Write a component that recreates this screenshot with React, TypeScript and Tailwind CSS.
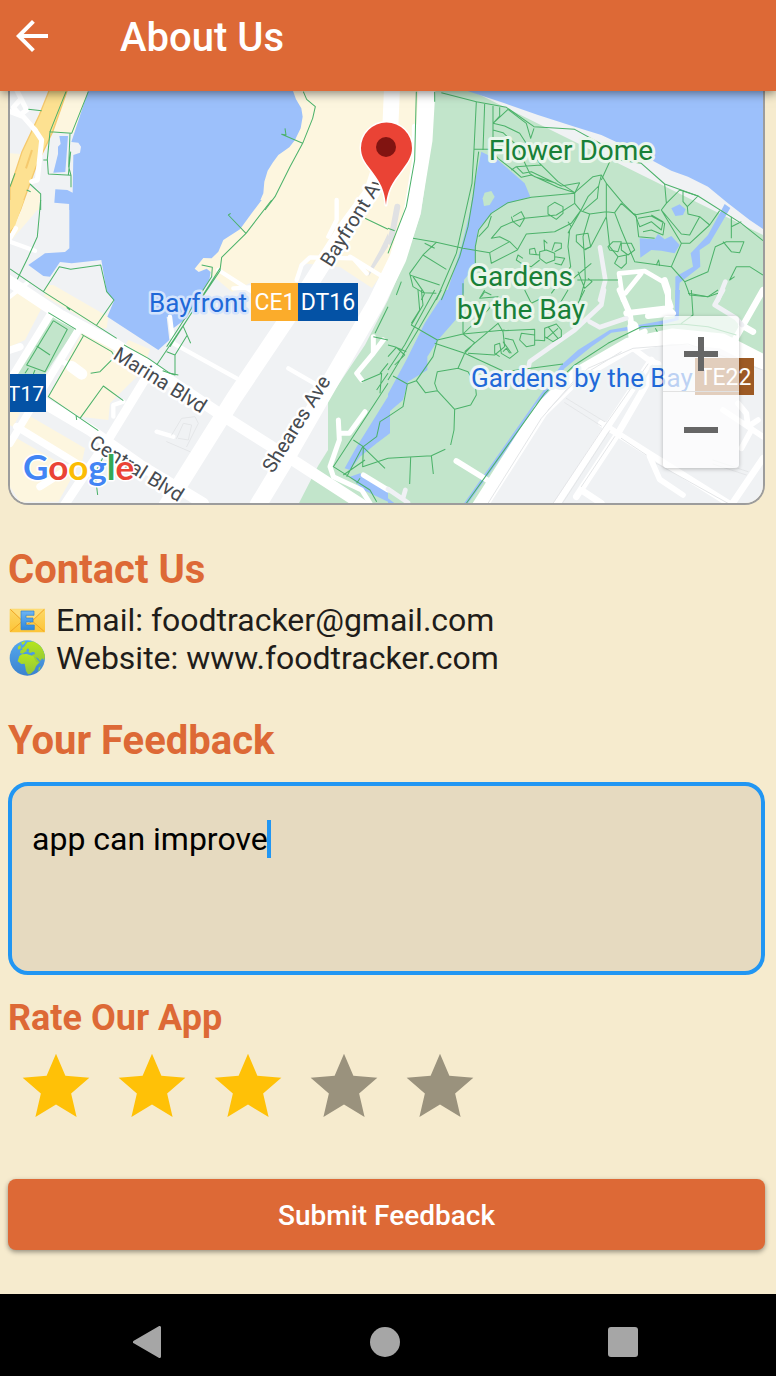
import { useState } from "react";

const WATER = "#9cc0fb";
const PARK = "#c2e5cb";
const SAND = "#fdf6df";

/* The map is traced in four tiles, each drawn on a grid of three units per pixel. */
const NW = "scale(0.33333)";
const NE = "translate(388 80) scale(0.33333)";
const SW = "translate(0 200) scale(0.33333)";
const SE = "translate(388 290) scale(0.33333)";

function MapLand() {
  return (
    <g>
      <rect x="8" y="90" width="760" height="420" fill="#f0f2f4" />
      <g fill={SAND}>
        <path transform={NW} d="M200 270H268L222 400L155 398Z M30 460L62 462L30 560Z M90 560L120 580L118 630H62Z" />
        <path d="M290 90H442L425 190L405 240L372 288L340 267L300 263L296 283L250 283L232 292L213 276L190 268Z" />
        <path transform={SW} d="M60 0H120L112 30L35 120V60Z M30 290L60 270L128 318L75 420L30 440Z M140 255L160 255L325 350L320 385L300 385L132 288Z M385 420L450 448L440 480L370 445Z M245 400L330 440L410 530L330 610L325 660L240 650L145 590Z M75 640L255 745L245 790L60 690Z M30 620L60 640L40 680L30 676Z M30 720L50 715L225 815L175 905H60L30 860Z" />
      </g>
      <g fill={WATER}>
        <path transform={NW} d="M265 270H878L888 298L904 325L908 350L902 385L885 420L868 442L835 465L818 488L803 512L793 545L790 580L780 603L760 630H208V612L163 608L166 568L202 570L218 578L220 465L240 458L243 440L235 428L214 426L222 402Z M178 408H204L196 516L160 518L174 462V440L182 432Z" />
        <path transform={SW} d="M208 0H785L755 40L720 88L670 120L655 155L635 175L610 174L584 206L596 216L620 206L632 216L628 240L560 355L520 385L506 352L500 350L508 420L475 450L322 350L342 302L320 275L304 180L215 190L180 186L150 230L130 228L85 195L135 160L195 156L208 145Z" />
      </g>
      <path d="M434 90H470L763 235V360L720 338L660 334L620 345L575 374L540 408L478 505H298L318 466L328 450V400L365 345L388 300L406 258L421 213L431 140Z" fill={PARK} />
      <path transform={SW} d="M145 338L228 385L130 530H70L35 520Z" fill={PARK} />
      <g fill={WATER}>
        <path transform={NE} d="M230 30H1130V450L1085 420L1020 370L960 320L900 290L850 272L800 245L690 188L640 165L560 140L450 105L350 70Z" />
        <path transform={NE} d="M280 215L330 240L410 310L427 350L360 370L310 400L270 450L262 500L260 560L228 600V640L170 660L220 500L245 400L262 300Z" />
        <path transform={SE} d="M175 0H225L220 70L150 150L118 200V240L60 275L45 330L0 368V312L55 210L110 100Z" />
        <path transform={SW} d="M1170 580V700L1130 730L1080 770L1050 810L1034 805L1070 740Z M1080 820L1164 870V905L1090 870L1050 830Z" />
        <path transform={NE} d="M1010 372L1027 384L965 490L935 510L937 560L875 608L870 665H862V590L915 560L908 520L960 465Z M850 385L875 373L893 388L885 405L862 408Z M755 475L800 478L810 462L830 478L850 468L875 495L860 520L820 512L790 510L757 533Z" />
        <path transform={SE} d="M862 0H876L872 90L790 112L670 128L610 170L530 235L240 640H228L520 225L570 180L665 120L790 98L860 85Z M0 625L20 640H0Z" />
      </g>
      <path transform={NE} d="M290 338L310 333L320 350L305 375L288 378L284 355Z" fill={PARK} />
      <path transform={NW} d="M148 270H202L158 395L108 500L62 628L30 700V565L66 455L118 345Z" fill="#fde191" stroke="#f5c96d" strokeWidth="4" />
      <path transform={NW} d="M96 450L78 505" fill="none" stroke="#f5c96d" strokeWidth="6" />
      <path transform={SW} d="M30 0H72L46 75L30 92Z" fill="#fde191" />
      <path transform={SW} d="M1164 100V140L1105 230L1112 200L1140 150Z" fill="#e0e1e3" />
    </g>
  );
}

function MapRoads() {
  return (
    <g fill="none" strokeLinejoin="round" strokeLinecap="round">
      <g stroke="#fff">
        <g transform={NW}>
          <path d="M50 270L80 330L60 345L40 322L60 300M30 335L70 350L105 390" strokeWidth="15" />
          <path d="M105 390L125 420L112 540L95 545" strokeWidth="15" />
        </g>
        <path d="M392 88L390 135L372 192L347 226L300 300L234 398L165 508" strokeWidth="16" />
        <path d="M427 88L424 140L412 213L398 258L376 303L333 377L287 457L258 505" strokeWidth="17" />
        <g transform={SW}>
          <path d="M0 225L180 345L350 435L650 635L870 775L1110 930" strokeWidth="34" />
          <path d="M100 590L270 690L420 795L610 910" strokeWidth="34" />
          <path d="M150 345L30 540M30 450L60 440M235 390L30 730M50 680L230 790L120 860" strokeWidth="22" />
          <path d="M440 530L330 710L190 920" strokeWidth="27" />
          <path d="M510 350L520 430L710 535M655 210L780 290M700 265L750 262M865 505L960 560M1010 0L1010 60L985 110M890 240L905 195L930 172L1060 175L1100 220M1050 170L1164 240M470 695L520 710M340 650V615L370 605M30 125L105 152M30 115L48 85M30 290L80 250" strokeWidth="13" />
          <path d="M215 500L245 522" strokeWidth="34" />
          <path d="M180 480L225 508" strokeWidth="16" />
          <path d="M1120 410L1120 460L1070 520L1085 540M1120 460L1150 420M1015 660L1018 720L990 800L1000 830L1085 870L1110 910M1020 700L1048 700L1095 635M1164 870L1090 825" strokeWidth="15" />
        </g>
        <path d="M474 515L541 410L577 375L629 345L672 336L722 341L775 368" strokeWidth="15" />
        <g transform={SE}>
          <path d="M505 645L655 415L790 210M565 620L690 430L810 222M580 600L640 640" strokeWidth="20" />
          <path d="M640 400L790 495L1030 645L1125 505" strokeWidth="20" />
          <path d="M205 513L310 578M735 175L775 205L810 222M785 500L815 568L885 615M1005 360L1125 440M1050 340L1075 370L1080 410L1110 390M1090 420L1060 475" strokeWidth="17" />
          <path d="M695 0L725 70L735 140L770 125M715 70L840 55L855 70L780 78M840 55V0L830 -30" strokeWidth="18" />
          <path d="M1125 0L1040 150M1060 105L1095 125" strokeWidth="19" />
          <path d="M735 110L740 155L690 185" strokeWidth="34" />
        </g>
        <g transform={NE}>
          <path d="M705 660L693 580L770 573L825 605L850 680M760 580L712 640" strokeWidth="14" />
          <path d="M80 140V270" strokeWidth="17" />
        </g>
      </g>
      <g stroke="#f0f1f5" strokeWidth="14">
        <path transform={NE} d="M636 502L652 600L636 660M1012 605L990 660" />
        <path transform={SE} d="M648 0L640 45L560 120L425 215L420 240M605 95L635 112L715 85M1005 0L980 45L1045 85L1062 105M0 597L60 638M52 600L45 625" />
      </g>
      <g stroke="#e4e6e8" strokeWidth="3">
        <path transform={SW} d="M515 705L545 655L585 650L595 670L560 740M530 715L550 670L575 675L565 720L535 715M570 755L500 725" />
        <path transform={SE} d="M535 325L650 395M530 338L640 408M975 510L1080 545M975 522L1075 555M300 640L460 385L560 270L700 185M480 360L600 235L735 175L900 162L1125 240" />
        <path transform={SE} d="M495 640L645 415L780 222M520 645L665 422M580 590L680 440M700 445L775 495M805 520L1020 640" />
      </g>
      <path transform={NE} d="M28 380L15 450L5 485" stroke="#e0e1e3" strokeWidth="18" />
    </g>
  );
}

function MapPaths() {
  return (
    <g fill="none" stroke="#4cb26a" strokeWidth="3.1" strokeLinejoin="round">
      <g transform={NW}>
        <path d="M198 275L150 395L215 400L265 275M85 328L125 332M150 395L142 478L145 522L213 526L206 500L210 400M130 480H142M213 526V562M45 520L30 560M90 552L122 582V630M80 570L92 575M205 525L212 455" />
        <path d="M910 275L920 298L946 320L938 355L908 430L870 500L825 590L795 630M908 430L845 403L858 405L855 385" />
      </g>
      <g transform={SW}>
        <path d="M122 0L112 110L85 170L52 238M30 207L130 275L350 415M130 275L178 200L212 208L302 195L320 275L342 300L290 375M200 322L210 330M372 435L445 475L510 520L535 525" />
        <path d="M815 0L738 100L665 172L660 212L470 495M738 100L685 45L692 40M605 195L637 202L635 230L500 440M510 440L660 205M550 380L572 430M562 405L525 465L500 455M525 465V525L488 512" />
        <path d="M145 338L228 388M160 362L202 388L135 515L80 495L160 362M110 438L150 465M85 505L75 520M105 510L100 522M245 403L335 455L345 470L300 515L272 520M250 408L145 590L295 692M240 655L310 558L370 602M230 660L228 645M310 770L285 820L293 885" />
        <path d="M1095 55L1164 88M1125 400L1164 320M1164 420L1120 410M1085 545L1145 520L1140 580M1140 520L1164 490M1164 550L1000 800L1110 870L1130 905M1164 520L1130 570M1060 720L1090 740L1130 710L1140 665L1164 650M1090 740L1088 800L1164 775M1040 830L1088 740L1155 805M1030 825L1095 780M1070 850L1080 835" />
      </g>
      <g transform={NE}>
        <path d="M85 35L80 240L55 380L0 520M140 35V65M160 38L265 65L355 82L438 140L560 148L645 195L690 240L760 250L830 312L930 348L1060 430L1125 482" />
        <path d="M265 65L258 208H308M290 72L285 210M258 208L252 310L225 430L205 520L145 660M272 215L255 350L240 440L215 530L160 660" />
        <path d="M315 78V215L330 235L375 270L400 292L430 285L510 322L560 338L615 290L640 285L655 310L705 370L745 410L752 470L800 475M335 82V108L315 130L360 88L415 130L428 175L438 145M315 130L350 138L395 160L418 195L455 250L510 305L560 338M315 150L345 158L385 195L425 280L440 290L505 310M370 270L385 260L460 255M385 260L405 280L430 275L520 318L575 308" />
        <path d="M560 340L430 352L360 368L310 400L272 450L262 500V550M575 308L560 340V370L578 392L605 402L655 395L680 398L700 370M578 392L600 350L632 318L628 355L585 392M640 285L632 318M665 245L640 300M655 310V410L608 500L590 510M655 410L665 500L690 530M680 398L700 450L740 545L850 560L880 490L820 390L835 370L875 330L930 348L898 380L885 365V335M830 312L835 368M700 370L740 405L815 390M740 400L755 440L790 425L820 450L825 425L790 405M750 415L790 408L830 430L825 465L790 450L765 455M820 390L880 462L905 465L935 410L900 402L898 380M935 410L965 435L905 490H880M850 560L890 605L960 575L982 500L1015 485L1068 485L1055 518L1030 515L1005 485M1030 475V410M1030 440L1060 425M890 605L905 645L960 650L990 640M1125 585L1085 560H1045L1025 600L1040 590M995 392L965 435" />
        <path d="M578 392L550 430L500 455L415 462L388 510L310 550L305 518L365 485L390 510M305 518L225 505L145 487L75 475M145 487L105 525L65 580L75 620L105 638L145 640M105 525L175 568M65 585L155 615M75 590L110 640L100 660M0 445L20 452M110 490L140 505M25 645L40 605M310 408L300 440L272 470M365 485L335 470L310 475L340 440L375 425L410 415L505 405L560 370M375 410L400 395L410 415L395 440L375 425L370 410M480 380L500 367L525 380V400L505 418L480 402ZM578 392L545 450L540 500L548 560L490 640M605 402L585 470L590 540L592 600L575 660M540 425L550 440L540 460M565 465L600 460L608 500L590 508L565 485ZM568 600H690M570 575L590 625L612 605L600 595M550 600L610 550M660 500L675 485H700L690 515L665 510ZM700 490H730L740 510L720 525L700 510ZM690 530L715 525V550L700 565L680 550ZM805 555L812 540L815 558" />
        <path d="M475 510L500 520V540L475 550L455 535V515ZM470 510L468 480L478 490M492 512L500 488L520 490V505L500 515M500 530L530 535L520 555L500 550M455 525L425 522V508L440 505L445 525M455 540L430 560L400 550L385 540L390 525L405 535M225 610V660M280 650L290 635L310 645" />
      </g>
      <g transform={SE}>
        <path d="M160 0L90 120L0 270M140 0L50 165L0 240M100 0L105 45L70 105L148 150L225 132L350 120M90 0L95 60L70 100M0 165L20 170L55 185M0 200L25 172L50 195L20 225M15 258L58 282L45 350L0 380M58 282L85 272L135 200L148 150M85 272L112 308L148 302L200 358L248 345L265 315L262 282L240 245L210 235L148 245L140 280L148 302M140 160L230 190L260 158L225 132L300 60M230 190L210 235M230 190L350 245L525 222M230 185L330 100L345 125L350 170L320 195L240 190M200 358L198 420L188 465M0 505L130 497L172 478M68 502L65 582M130 497L136 552M225 60V130M300 60L330 20L275 25L290 0M340 20L360 60M410 0L430 40L470 20M510 50L540 0M570 40L590 0" />
        <path d="M345 122L440 118V165L415 170L395 150L400 130L440 135M350 145L375 150L390 185L365 205L340 190L335 160L320 165V190L335 200M345 155L370 190M345 185L355 175L365 190M440 150L470 152L470 115L505 102L520 120V140L495 155L470 140M480 110L510 145M510 115L475 145" />
        <path d="M235 640L470 310L560 225L660 160L760 110L880 102L960 110L1045 135M802 115L808 125M910 0L915 75L880 100M900 10L960 20L990 0" />
      </g>
    </g>
  );
}

function MapLabels() {
  return (
    <g fontFamily="Roboto, sans-serif" fontSize="28" paintOrder="stroke" strokeLinejoin="round">
      <g fill="#188038" stroke="#eaf6ec" strokeWidth="6" textAnchor="middle">
        <text x="571" y="160">Flower Dome</text>
        <text x="521" y="286">Gardens</text>
        <text x="521" y="319">by the Bay</text>
      </g>
      <g fill="#1f69d8" fontSize="26">
        <text x="149" y="312" stroke="#d3e3fc" strokeWidth="5">Bayfront</text>
        <text x="471" y="387" stroke="#eef5f7" strokeWidth="6">Gardens by the Bay</text>
      </g>
      <g fill="#474b50" stroke="#ffffff" strokeWidth="5" fontSize="20">
        <text transform="translate(112 358) rotate(32)">Marina Blvd</text>
        <text transform="translate(88 446) rotate(32)">Central Blvd</text>
        <text transform="translate(331 268) rotate(-58)">Bayfront Av</text>
        <text transform="translate(273 474) rotate(-58)">Sheares Ave</text>
      </g>
      <rect x="251" y="283" width="48" height="38" fill="#fbac2b" />
      <rect x="298" y="283" width="60" height="38" fill="#0452a5" />
      <rect x="8" y="374" width="38" height="38" fill="#0452a5" />
      <rect x="695" y="358" width="59" height="37" fill="#9d5a24" />
      <g fill="#fff" fontSize="23">
        <text x="275" y="310" textAnchor="middle">CE1</text>
        <text x="328" y="310" textAnchor="middle">DT16</text>
        <text x="44" y="401" textAnchor="end" fontSize="21">T17</text>
        <text x="725" y="385" textAnchor="middle">TE22</text>
      </g>
      <path d="M386 205C384 186 378 180 371 170C364 161 361 156 361 148A25.500 25.500 0 0 1 412 148C412 156 408 162 402 170C394 181 388 187 386 205Z" fill="#ea4335" stroke="#fff" strokeWidth="3" />
      <circle cx="386" cy="147" r="10" fill="#811411" />
      <text x="23" y="480" fontFamily="Lato, sans-serif" fontSize="35" fontWeight="700" stroke="#fff" strokeWidth="3">
        <tspan fill="#4285f4">G</tspan>
        <tspan fill="#ea4335">o</tspan>
        <tspan fill="#fbbc04">o</tspan>
        <tspan fill="#4285f4">g</tspan>
        <tspan fill="#34a853">l</tspan>
        <tspan fill="#ea4335">e</tspan>
      </text>
    </g>
  );
}

function LocationMap() {
  return (
    <section aria-label="Location" className="relative overflow-hidden rounded-b-[20px] border-2 border-t-0 border-[#9c9c9c]">
      <svg viewBox="10 91 753 412" className="block w-full">
        <MapLand />
        <MapRoads />
        <MapPaths />
        <MapLabels />
      </svg>
      <div className="absolute right-6 bottom-[35px] flex w-[76px] flex-col divide-y divide-[#e2e2e2] rounded-sm bg-white/70 shadow-[0_1px_4px_rgba(0,0,0,0.25)]">
        <button type="button" aria-label="Zoom in" className="flex h-19 items-center justify-center">
          <svg viewBox="0 0 34 34" className="size-[34px]" fill="none" stroke="#666" strokeWidth="6">
            <path d="M0 17H34M17 0V34" />
          </svg>
        </button>
        <button type="button" aria-label="Zoom out" className="flex h-19 items-center justify-center">
          <svg viewBox="0 0 34 34" className="size-[34px]" fill="none" stroke="#666" strokeWidth="6">
            <path d="M0 17H34" />
          </svg>
        </button>
      </div>
    </section>
  );
}

function EmailIcon() {
  return (
    <svg viewBox="0 0 114 114" aria-hidden="true" className="size-[38px]">
      <defs>
        <linearGradient id="envelope" x1="0" y1="0" x2="0" y2="1">
          <stop offset="0" stopColor="#fcd868" />
          <stop offset="1" stopColor="#fdc436" />
        </linearGradient>
        <linearGradient id="letter" x1="0" y1="0" x2="0" y2="1">
          <stop offset="0" stopColor="#6cb4f2" />
          <stop offset="1" stopColor="#2f88dc" />
        </linearGradient>
      </defs>
      <rect x="5" y="23" width="106" height="71" rx="3" fill="url(#envelope)" />
      <path d="M7 92L46 58M109 92L70 58" stroke="#f0a524" strokeWidth="3" />
      <path d="M7 25L50 66Q58 72 66 66L109 25" fill="#fedd78" stroke="#f0a524" strokeWidth="3" />
      <path d="M39 30H78V43H54V51H75V63H54V72H79V86H39Z" fill="url(#letter)" stroke="#2f80d0" strokeWidth="2" />
    </svg>
  );
}

function GlobeIcon() {
  return (
    <svg viewBox="0 0 114 114" aria-hidden="true" className="size-[38px]">
      <defs>
        <linearGradient id="ocean" x1="0" y1="0" x2="0" y2="1">
          <stop offset="0" stopColor="#55a9ee" />
          <stop offset="1" stopColor="#3b82cf" />
        </linearGradient>
        <linearGradient id="land" x1="0" y1="0" x2="0" y2="1">
          <stop offset="0" stopColor="#b6e61c" />
          <stop offset="1" stopColor="#91c43c" />
        </linearGradient>
        <clipPath id="disc">
          <circle cx="58" cy="57" r="53" />
        </clipPath>
      </defs>
      <circle cx="58" cy="57" r="53" fill="url(#ocean)" />
      <g clipPath="url(#disc)" fill="url(#land)">
        <path d="M40 10L52 6L49 14L43 18Z M48 24L58 10L82 6L102 24L112 50L108 64L103 58L96 66L90 58L82 54L92 66L96 70L84 78L80 68L74 54L72 48L82 45L76 38L66 42L60 36L52 38L44 44L36 42L38 34L44 32L42 27Z M31 22L37 18L39 28L32 32L29 28Z" />
        <path d="M34 51L42 46L56 45L68 49L76 52L84 68L92 72L84 82L79 94L68 104L60 106L54 96L52 84L50 74L40 75L29 67Z M92 86L98 82L94 96L91 96Z" />
      </g>
      <path d="M54 34L60 28L64 34L60 38Z M70 42L80 40L78 45L71 46Z" fill="#4a9de4" />
    </svg>
  );
}

export default function App() {
  const [feedback, setFeedback] = useState("app can improve");
  const [rating, setRating] = useState(3);

  return (
    <div className="flex min-h-screen flex-col bg-[#f6ebce] font-[Roboto,sans-serif] text-[#1f1d1a]">
      <header className="relative z-10 flex h-[91px] items-start bg-[#dd6936] px-2 pt-3 text-white shadow-[0_2px_10px_rgba(0,0,0,0.5)]">
        <button type="button" aria-label="Back" className="size-12">
          <svg viewBox="0 0 24 24" className="size-12" fill="currentColor">
            <path d="M20 11H7.83l5.59-5.59L12 4l-8 8 8 8 1.41-1.41L7.83 13H20v-2z" />
          </svg>
        </button>
        <h1 className="ml-16 text-[40px] leading-[52px] font-medium">About Us</h1>
      </header>

      <main className="flex flex-1 flex-col pr-[11px] pb-11 pl-2">
        <LocationMap />

        <h2 className="mt-[41px] text-[40px] leading-12 font-bold text-[#dd6936]">Contact Us</h2>
        <div className="mt-[7px] text-[32px] leading-[38px]">
          <p className="flex items-center gap-[10px]">
            <EmailIcon />
            Email: foodtracker@gmail.com
          </p>
          <p className="flex items-center gap-[10px]">
            <GlobeIcon />
            Website: www.foodtracker.com
          </p>
        </div>

        <h2 className="mt-10 text-[40px] leading-12 font-bold text-[#dd6936]">
          <label htmlFor="feedback">Your Feedback</label>
        </h2>
        <div className="relative mt-[17px]">
          <textarea
            id="feedback"
            value={feedback}
            onChange={(e) => setFeedback(e.target.value)}
            className="block h-[193px] w-full resize-none rounded-[20px] border-4 border-[#2196f3] bg-[#e6dac0] px-5 py-[34px] text-[32px] leading-[38px] text-black caret-transparent outline-none"
          />
          <span aria-hidden="true" className="absolute top-[38px] left-[259px] h-[38px] w-1 bg-[#2196f3]" />
        </div>

        <h2 className="mt-6 text-[36px] leading-[38px] font-bold text-[#dd6936]">Rate Our App</h2>
        <div className="mt-[2px] flex">
          {[1, 2, 3, 4, 5].map((n) => (
            <button
              key={n}
              type="button"
              aria-label={`${n} stars`}
              aria-pressed={n <= rating}
              onClick={() => setRating(n)}
              className={n <= rating ? "flex size-24 items-center justify-center text-[#ffc107]" : "flex size-24 items-center justify-center text-[#9a927d]"}
            >
              <svg viewBox="0 0 24 24" className="size-20" fill="currentColor">
                <path d="M12 17.27L18.18 21l-1.64-7.03L22 9.24l-7.19-.61L12 2 9.19 8.63 2 9.24l5.46 4.73L5.82 21z" />
              </svg>
            </button>
          ))}
        </div>

        <button
          type="button"
          className="mt-11 h-[71px] rounded-lg bg-[#dd6936] pt-[2px] text-[28px] font-medium text-white shadow-[0_2px_5px_rgba(0,0,0,0.4)]"
        >
          Submit Feedback
        </button>
      </main>

      <nav aria-label="System" className="grid h-[82px] grid-cols-3 items-center bg-black pt-[14px] pr-[34px] pl-7 text-[#a6a6a6]">
        <button type="button" aria-label="System back" className="flex justify-center">
          <svg viewBox="0 0 32 32" className="size-8" fill="currentColor" stroke="currentColor" strokeWidth="3" strokeLinejoin="round">
            <path d="M28.500 1.500V30.500L3.500 16Z" />
          </svg>
        </button>
        <button type="button" aria-label="Home" className="flex justify-center">
          <span className="size-[30px] rounded-full bg-current" />
        </button>
        <button type="button" aria-label="Recent apps" className="flex justify-center">
          <span className="size-[30px] rounded-[3px] bg-current" />
        </button>
      </nav>
    </div>
  );
}
